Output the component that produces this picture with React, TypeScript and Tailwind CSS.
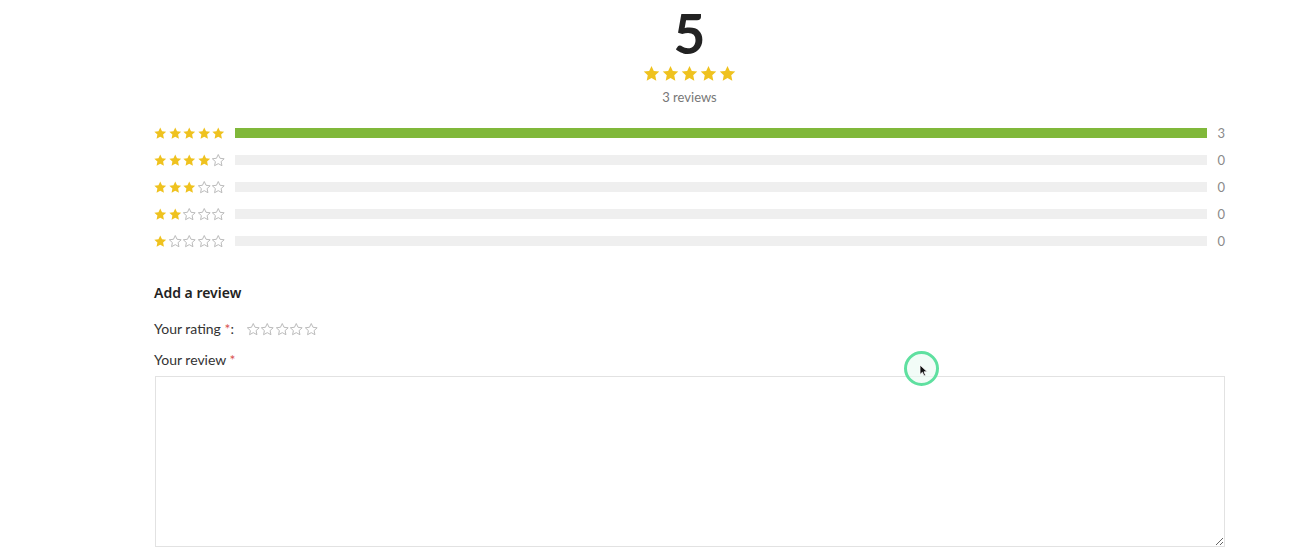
import React from "react";

const STAR = "M12 2.5l2.94 6.26 6.86.8-5.08 4.68 1.36 6.78L12 17.6l-6.08 3.42 1.36-6.78L2.2 9.56l6.86-.8z";

function Star({ filled, size }: { filled: boolean; size: number }) {
  return (
    <svg width={size} height={size} viewBox="0 0 24 24" className="shrink-0">
      {filled ? (
        <path d={STAR} fill="#efc21f" />
      ) : (
        <path d={STAR} fill="none" stroke="#b8b8b8" strokeWidth="1.6" strokeLinejoin="round" />
      )}
    </svg>
  );
}

function Stars({ n, size }: { n: number; size: number }) {
  return (
    <div className="flex items-center">
      {[0, 1, 2, 3, 4].map((i) => (
        <Star key={i} filled={i < n} size={size} />
      ))}
    </div>
  );
}

const rows = [
  { n: 5, count: 3, pct: 100 },
  { n: 4, count: 0, pct: 0 },
  { n: 3, count: 0, pct: 0 },
  { n: 2, count: 0, pct: 0 },
  { n: 1, count: 0, pct: 0 },
];

export default function App() {
  return (
    <div
      className="relative w-[1308px] h-[554px] bg-white overflow-hidden"
      style={{ fontFamily: "Lato, 'Open Sans', sans-serif" }}
    >
      <div className="ml-[154px] w-[1071px] flex flex-col">
        <div className="flex flex-col items-center pt-[3px]">
          <div className="text-[55px] leading-[60px] font-bold text-[#222]">5</div>
          <div className="mt-[1px]">
            <Stars n={5} size={19} />
          </div>
          <div className="mt-[6px] text-[13px] leading-[16px] text-[#777]">3 reviews</div>
        </div>

        <div className="mt-[23px] flex flex-col gap-[17px]">
          {rows.map((r) => (
            <div key={r.n} className="flex items-center h-[10px]">
              <div className="w-[81px] -ml-[1px] mr-[1px]">
                <Stars n={r.n} size={14.5} />
              </div>
              <div className="w-[973px] h-[10px] bg-[#efefef]">
                <div className="h-full bg-[#80b83a]" style={{ width: `${r.pct}%` }} />
              </div>
              <div className="ml-[10px] text-[13px] text-[#8a8a8a] leading-none">{r.count}</div>
            </div>
          ))}
        </div>

        <div
          className="mt-[38px] text-[14px] leading-[18px] font-semibold text-[#222]"
          style={{ fontFamily: "'Noto Sans', 'Open Sans', sans-serif" }}
        >
          Add a review
        </div>

        <div className="mt-[18px] flex items-center text-[14px] leading-[18px] text-[#333]">
          <span>
            Your rating <span className="text-[#d9534f]">*</span>:
          </span>
          <div className="ml-[12px]">
            <Stars n={0} size={14.5} />
          </div>
        </div>

        <div className="mt-[13px] text-[14px] leading-[18px] text-[#333]">
          Your review <span className="text-[#d9534f]">*</span>
        </div>

        <textarea className="mt-[7px] ml-[1px] w-[1070px] h-[171px] border border-[#e2e2e2] bg-white resize block" />
      </div>

      <div className="absolute left-[904px] top-[351px] w-[35px] h-[35px] rounded-full border-[3px] border-[#5fe0a0] bg-[#eafaf1]/60" />
      <svg className="absolute left-[919px] top-[364px]" width="10" height="13" viewBox="0 0 10 13">
        <path d="M1 1 L1 10.5 L3.4 8.3 L5 12 L6.6 11.3 L5 7.8 L8.3 7.8 Z" fill="#111" stroke="#fff" strokeWidth="0.8" />
      </svg>
    </div>
  );
}
